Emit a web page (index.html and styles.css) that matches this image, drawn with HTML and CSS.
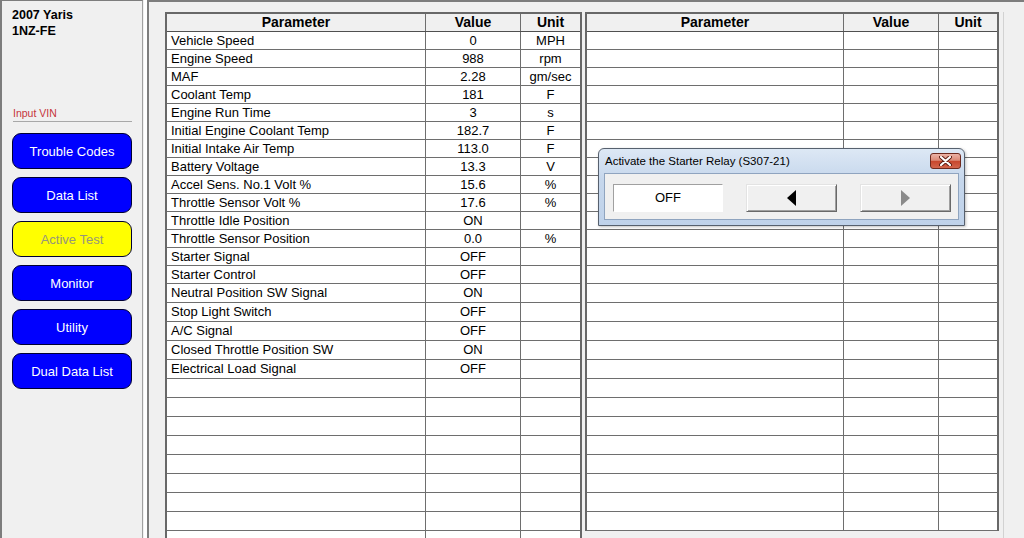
FILE: index.html
```html
<!DOCTYPE html>
<html>
<head>
<meta charset="utf-8">
<link rel="stylesheet" href="styles.css">
</head>
<body>
<div class="app">
  <aside class="sidebar">
    <div class="veh">2007 Yaris<br>1NZ-FE</div>
    <div class="vin">Input VIN</div>
    <nav class="nav-list">
      <div class="nav">Trouble Codes</div>
      <div class="nav">Data List</div>
      <div class="nav active">Active Test</div>
      <div class="nav">Monitor</div>
      <div class="nav">Utility</div>
      <div class="nav">Dual Data List</div>
    </nav>
  </aside>
  <div class="splitter"></div>
  <main class="main">
    <div class="grid grid-a">
      <div class="row head"><div class="c c-p">Parameter</div><div class="c c-v">Value</div><div class="c c-u">Unit</div></div>
      <div class="row"><div class="c c-p">Vehicle Speed</div><div class="c c-v">0</div><div class="c c-u">MPH</div></div>
      <div class="row"><div class="c c-p">Engine Speed</div><div class="c c-v">988</div><div class="c c-u">rpm</div></div>
      <div class="row"><div class="c c-p">MAF</div><div class="c c-v">2.28</div><div class="c c-u">gm/sec</div></div>
      <div class="row"><div class="c c-p">Coolant Temp</div><div class="c c-v">181</div><div class="c c-u">F</div></div>
      <div class="row"><div class="c c-p">Engine Run Time</div><div class="c c-v">3</div><div class="c c-u">s</div></div>
      <div class="row"><div class="c c-p">Initial Engine Coolant Temp</div><div class="c c-v">182.7</div><div class="c c-u">F</div></div>
      <div class="row"><div class="c c-p">Initial Intake Air Temp</div><div class="c c-v">113.0</div><div class="c c-u">F</div></div>
      <div class="row"><div class="c c-p">Battery Voltage</div><div class="c c-v">13.3</div><div class="c c-u">V</div></div>
      <div class="row"><div class="c c-p">Accel Sens. No.1 Volt %</div><div class="c c-v">15.6</div><div class="c c-u">%</div></div>
      <div class="row"><div class="c c-p">Throttle Sensor Volt %</div><div class="c c-v">17.6</div><div class="c c-u">%</div></div>
      <div class="row"><div class="c c-p">Throttle Idle Position</div><div class="c c-v">ON</div><div class="c c-u"></div></div>
      <div class="row"><div class="c c-p">Throttle Sensor Position</div><div class="c c-v">0.0</div><div class="c c-u">%</div></div>
      <div class="row"><div class="c c-p">Starter Signal</div><div class="c c-v">OFF</div><div class="c c-u"></div></div>
      <div class="row"><div class="c c-p">Starter Control</div><div class="c c-v">OFF</div><div class="c c-u"></div></div>
      <div class="row tall"><div class="c c-p">Neutral Position SW Signal</div><div class="c c-v">ON</div><div class="c c-u"></div></div>
      <div class="row tall"><div class="c c-p">Stop Light Switch</div><div class="c c-v">OFF</div><div class="c c-u"></div></div>
      <div class="row tall"><div class="c c-p">A/C Signal</div><div class="c c-v">OFF</div><div class="c c-u"></div></div>
      <div class="row tall"><div class="c c-p">Closed Throttle Position SW</div><div class="c c-v">ON</div><div class="c c-u"></div></div>
      <div class="row tall"><div class="c c-p">Electrical Load Signal</div><div class="c c-v">OFF</div><div class="c c-u"></div></div>
      <div class="row tall"><div class="c c-p"></div><div class="c c-v"></div><div class="c c-u"></div></div>
      <div class="row tall"><div class="c c-p"></div><div class="c c-v"></div><div class="c c-u"></div></div>
      <div class="row tall"><div class="c c-p"></div><div class="c c-v"></div><div class="c c-u"></div></div>
      <div class="row tall"><div class="c c-p"></div><div class="c c-v"></div><div class="c c-u"></div></div>
      <div class="row tall"><div class="c c-p"></div><div class="c c-v"></div><div class="c c-u"></div></div>
      <div class="row tall"><div class="c c-p"></div><div class="c c-v"></div><div class="c c-u"></div></div>
      <div class="row tall"><div class="c c-p"></div><div class="c c-v"></div><div class="c c-u"></div></div>
      <div class="row tall"><div class="c c-p"></div><div class="c c-v"></div><div class="c c-u"></div></div>
      <div class="row tall"><div class="c c-p"></div><div class="c c-v"></div><div class="c c-u"></div></div>
    </div>
    <div class="grid grid-b">
      <div class="row head"><div class="c c-p">Parameter</div><div class="c c-v">Value</div><div class="c c-u">Unit</div></div>
      <div class="row"><div class="c c-p"></div><div class="c c-v"></div><div class="c c-u"></div></div>
      <div class="row"><div class="c c-p"></div><div class="c c-v"></div><div class="c c-u"></div></div>
      <div class="row"><div class="c c-p"></div><div class="c c-v"></div><div class="c c-u"></div></div>
      <div class="row"><div class="c c-p"></div><div class="c c-v"></div><div class="c c-u"></div></div>
      <div class="row"><div class="c c-p"></div><div class="c c-v"></div><div class="c c-u"></div></div>
      <div class="row"><div class="c c-p"></div><div class="c c-v"></div><div class="c c-u"></div></div>
      <div class="row"><div class="c c-p"></div><div class="c c-v"></div><div class="c c-u"></div></div>
      <div class="row"><div class="c c-p"></div><div class="c c-v"></div><div class="c c-u"></div></div>
      <div class="row"><div class="c c-p"></div><div class="c c-v"></div><div class="c c-u"></div></div>
      <div class="row"><div class="c c-p"></div><div class="c c-v"></div><div class="c c-u"></div></div>
      <div class="row"><div class="c c-p"></div><div class="c c-v"></div><div class="c c-u"></div></div>
      <div class="row"><div class="c c-p"></div><div class="c c-v"></div><div class="c c-u"></div></div>
      <div class="row"><div class="c c-p"></div><div class="c c-v"></div><div class="c c-u"></div></div>
      <div class="row"><div class="c c-p"></div><div class="c c-v"></div><div class="c c-u"></div></div>
      <div class="row tall"><div class="c c-p"></div><div class="c c-v"></div><div class="c c-u"></div></div>
      <div class="row tall"><div class="c c-p"></div><div class="c c-v"></div><div class="c c-u"></div></div>
      <div class="row tall"><div class="c c-p"></div><div class="c c-v"></div><div class="c c-u"></div></div>
      <div class="row tall"><div class="c c-p"></div><div class="c c-v"></div><div class="c c-u"></div></div>
      <div class="row tall"><div class="c c-p"></div><div class="c c-v"></div><div class="c c-u"></div></div>
      <div class="row tall"><div class="c c-p"></div><div class="c c-v"></div><div class="c c-u"></div></div>
      <div class="row tall"><div class="c c-p"></div><div class="c c-v"></div><div class="c c-u"></div></div>
      <div class="row tall"><div class="c c-p"></div><div class="c c-v"></div><div class="c c-u"></div></div>
      <div class="row tall"><div class="c c-p"></div><div class="c c-v"></div><div class="c c-u"></div></div>
      <div class="row tall"><div class="c c-p"></div><div class="c c-v"></div><div class="c c-u"></div></div>
      <div class="row tall"><div class="c c-p"></div><div class="c c-v"></div><div class="c c-u"></div></div>
      <div class="row tall"><div class="c c-p"></div><div class="c c-v"></div><div class="c c-u"></div></div>
      <div class="row tall"><div class="c c-p"></div><div class="c c-v"></div><div class="c c-u"></div></div>
    </div>
    <div class="endline"></div>
  </main>

  <div class="dialog">
    <div class="d-title">
      <span class="d-text">Activate the Starter Relay (S307-21)</span>
      <div class="d-close">
        <svg width="13" height="10" viewBox="0 0 13 10">
          <path d="M2 1 L11 9 M11 1 L2 9" stroke="#5a1a10" stroke-width="4" stroke-linecap="round"/>
          <path d="M2 1 L11 9 M11 1 L2 9" stroke="#ffffff" stroke-width="2.2" stroke-linecap="round"/>
        </svg>
      </div>
    </div>
    <div class="d-body">
      <div class="off">OFF</div>
      <div class="btn">
        <svg width="9" height="16" viewBox="0 0 9 16"><polygon points="9,0 9,16 0,8" fill="#000"/></svg>
      </div>
      <div class="btn">
        <svg width="9" height="16" viewBox="0 0 9 16"><polygon points="0,0 0,16 9,8" fill="#8a8a8a"/></svg>
      </div>
    </div>
  </div>
</div>
</body>
</html>
```

FILE: styles.css
```css
html, body {
  margin: 0;
  padding: 0;
}
body {
  width: 1024px;
  height: 538px;
  overflow: hidden;
  background: #f0f0f0;
  font-family: "Liberation Sans", Arial, sans-serif;
  color: #000;
}
.app {
  position: relative;
  display: flex;
  height: 538px;
}
.sidebar {
  width: 143px;
  box-sizing: border-box;
  border-left: 2px solid #7d7d7d;
  border-top: 1px solid #7d7d7d;
  border-right: 1px solid #a0a0a0;
  padding: 6px 0 0 10px;
}
.veh {
  font-weight: bold;
  font-size: 12.5px;
  line-height: 16px;
}
.vin {
  margin-top: 68px;
  margin-left: 1px;
  width: 119px;
  font-size: 10.5px;
  line-height: 13px;
  padding-bottom: 1px;
  color: #c6353b;
  border-bottom: 1px solid #a8a8a8;
}
.nav-list {
  margin-top: 11px;
  display: flex;
  flex-direction: column;
  gap: 8px;
}
.nav {
  width: 120px;
  height: 36px;
  box-sizing: border-box;
  border: 1px solid #000033;
  border-radius: 9px;
  background: #0000ff;
  color: #fff;
  font-size: 13px;
  display: flex;
  align-items: center;
  justify-content: center;
}
.nav.active {
  background: #ffff00;
  color: #96967c;
}
.splitter {
  width: 3px;
  margin-left: 1px;
  background: #fff;
}
.main {
  flex: 1;
  border-left: 2px solid #7d7d7d;
  border-top: 2px solid #7d7d7d;
  padding: 10px 0 0 16px;
  display: flex;
  align-items: flex-start;
}
.grid {
  border: 2px solid #686868;
  border-bottom: none;
  background: #fff;
}
.grid-b {
  margin-left: 3px;
}
.endline {
  margin-left: 4px;
  width: 1px;
  align-self: stretch;
  background: #d2d2d2;
}
.row {
  display: flex;
  height: 18px;
  box-sizing: border-box;
  border-bottom: 1px solid #6e6e6e;
  font-size: 13px;
  line-height: 17px;
}
.row.tall {
  height: 19px;
  line-height: 18px;
}
.row.head {
  background: #f0f0f0;
  font-weight: bold;
  font-size: 14px;
  border-bottom-color: #505050;
}
.row.head .c-p {
  text-align: center;
  padding-left: 0;
}
.c {
  box-sizing: border-box;
  border-right: 1px solid #6e6e6e;
  white-space: nowrap;
  overflow: hidden;
}
.c-p {
  width: 259px;
  padding-left: 4px;
}
.c-v {
  width: 95px;
  text-align: center;
}
.c-u {
  width: 59px;
  text-align: center;
  border-right: none;
}
.grid-b .c-p {
  width: 257px;
}
.grid-b .c-u {
  width: 58px;
}

/* dialog */
.dialog {
  position: absolute;
  left: 598px;
  top: 148px;
  width: 367px;
  height: 78px;
  box-sizing: border-box;
  border: 1px solid #56606e;
  border-radius: 6px 6px 0 0;
  background: linear-gradient(#dde8f5, #c6d7ec 40%, #bfd2ea);
  padding: 0 5px 5px;
  display: flex;
  flex-direction: column;
  box-shadow: 1px 1px 3px rgba(0, 0, 0, 0.25);
}
.d-title {
  height: 24px;
  display: flex;
  justify-content: space-between;
  align-items: flex-start;
}
.d-text {
  padding-left: 1px;
  font-size: 11.5px;
  line-height: 25px;
  color: #000;
}
.d-close {
  margin-top: 4px;
  margin-right: -2px;
  width: 31px;
  height: 16px;
  box-sizing: border-box;
  border: 1px solid #6e2a1f;
  border-radius: 3px;
  background: linear-gradient(#ecb3a6 0%, #dc8a77 45%, #c8472e 52%, #d2654d 100%);
  display: flex;
  align-items: center;
  justify-content: center;
}
.d-body {
  flex: 1;
  background: #f0f0f0;
  border: 1px solid #8fa4bf;
  display: flex;
  align-items: flex-start;
  padding: 10px 0 0 8px;
  gap: 23px;
}
.off {
  width: 110px;
  height: 28px;
  box-sizing: border-box;
  background: #fff;
  border-top: 1px solid #a0a0a0;
  border-left: 1px solid #a0a0a0;
  border-bottom: 1px solid #fff;
  border-right: 1px solid #fff;
  font-size: 13px;
  line-height: 26px;
  text-align: center;
}
.btn {
  width: 91px;
  height: 28px;
  box-sizing: border-box;
  background: #f0f0f0;
  border: 1px solid;
  border-color: #e3e3e3 #696969 #696969 #e3e3e3;
  box-shadow: inset 1px 1px #ffffff, inset -1px -1px #a0a0a0;
  display: flex;
  align-items: center;
  justify-content: center;
}
```
